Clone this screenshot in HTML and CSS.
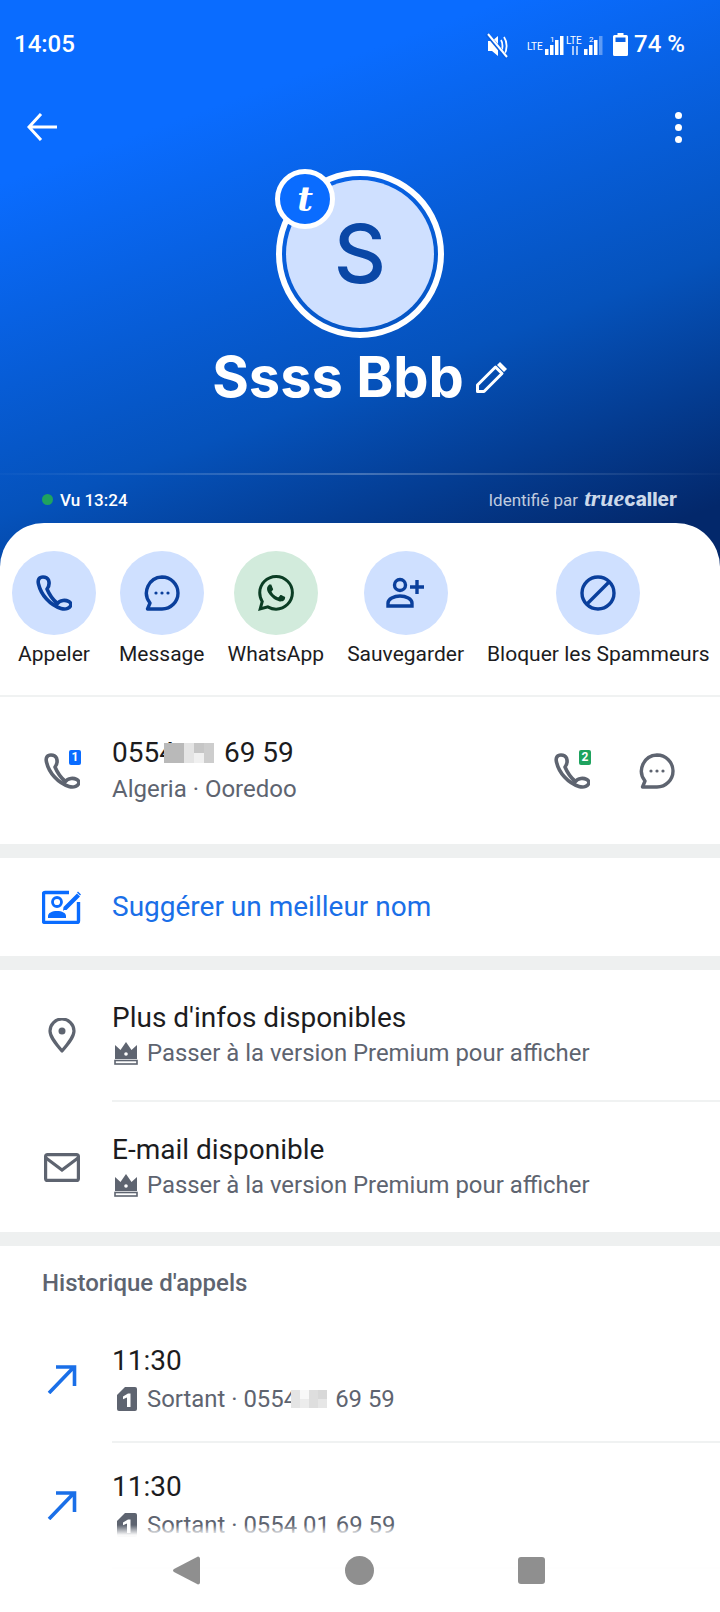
FILE: index.html
```html
<!DOCTYPE html>
<html>

<head>
    <meta charset="UTF-8">
    <title>Ssss Bbb</title>
    <link rel="stylesheet" href="styles.css">
</head>

<body>
    <svg class="defs" width="0" height="0">
        <symbol id="phone" viewBox="0 0 36 36">
            <path d="M7 2C3 2 1.500 5 2.500 9 5 20 14 30 25 33.500c5 1.500 9.500-.5 10-4 0-2.500-4-4.500-8-4-3 .5-4.500 1.500-5.500 3C17 25 13.500 20 11 14c2-2.500 2.500-6 1.500-9C11.500 3 10 2 7 2Z" fill="none" stroke="currentColor" stroke-width="3.600" stroke-linejoin="round" />
        </symbol>
        <symbol id="bubble" viewBox="0 0 36 36">
            <path d="M18 2a16 16 0 0 1 0 32H3.500l2.500-6A16 16 0 0 1 18 2Z" fill="none" stroke="currentColor" stroke-width="3.400" stroke-linejoin="round" />
            <circle cx="12" cy="18" r="1.600" fill="currentColor" />
            <circle cx="18" cy="18" r="1.600" fill="currentColor" />
            <circle cx="24" cy="18" r="1.600" fill="currentColor" />
        </symbol>
        <symbol id="crown" viewBox="0 0 24 24">
            <path d="M1 4l5.500 5L12 1l5.500 8L23 4v14H1Z" fill="currentColor" />
            <rect x="1" y="19.500" width="22" height="3.500" fill="#fff" stroke="currentColor" stroke-width="1.600" />
            <circle cx="12" cy="13" r="1.800" fill="#fff" />
        </symbol>
        <symbol id="outgoing" viewBox="0 0 30 30">
            <path d="M2 29L27 3M9 3h18.500v19" fill="none" stroke="currentColor" stroke-width="3.600" />
        </symbol>
        <symbol id="sim" viewBox="0 0 20 24">
            <path d="M8 0h10a2 2 0 0 1 2 2v20a2 2 0 0 1-2 2H2a2 2 0 0 1-2-2V8Z" fill="currentColor" />
            <path d="M6 9.500l5-3h2.500V20h-3.500V10.500l-4 1.800Z" fill="#fff" />
        </symbol>
    </svg>

    <div class="page">
        <header class="hero">
            <div class="status">
                <span class="clock">14:05</span>
                <div class="status-right">
                    <svg class="status-icons" width="116" height="30" viewBox="-2 0 116 30">
                        <g transform="translate(-2 0)">
                            <path d="M1 10h4l6-5v20l-6-5H1Z" fill="#fff" />
                            <path d="M14 9c2 3 2 9 0 12M17 6c3.500 5 3.500 13 0 18" fill="none" stroke="#fff" stroke-width="1.800" />
                            <path d="M0 3l20 24" stroke="#0a5fe0" stroke-width="4" />
                            <path d="M1 3l19 23" stroke="#fff" stroke-width="2" />
                        </g>
                        <text class="lte" x="38" y="19">LTE</text>
                        <text class="sim-no" x="61" y="11">1</text>
                        <rect x="56" y="18" width="3.500" height="6" fill="#fff" />
                        <rect x="61" y="14" width="3.500" height="10" fill="#fff" />
                        <rect x="66" y="9" width="3.500" height="15" fill="#fff" />
                        <rect x="71" y="5" width="3.500" height="19" fill="#fff" />
                        <text class="lte" x="77" y="13">LTE</text>
                        <path d="M84 15v9M88 15v9" stroke="#fff" stroke-width="1.300" />
                        <text class="sim-no" x="100" y="11">2</text>
                        <rect x="95" y="18" width="3.500" height="6" fill="#fff" />
                        <rect x="100" y="14" width="3.500" height="10" fill="#fff" />
                        <rect x="105" y="9" width="3.500" height="15" fill="#fff" />
                        <rect x="110" y="5" width="3.500" height="19" fill="#fff" fill-opacity=".35" />
                    </svg>
                    <svg class="battery" width="15" height="23" viewBox="0 0 15 23">
                        <path d="M4.500 0h6v2h3a1.500 1.500 0 0 1 1.500 1.500V21.500a1.500 1.500 0 0 1-1.500 1.500h-12A1.500 1.500 0 0 1 0 21.500V3.500A1.500 1.500 0 0 1 1.500 2h3Z" fill="#fff" />
                        <rect x="2.500" y="4.500" width="10" height="4.500" fill="#0a62e6" />
                    </svg>
                    <span class="percent">74 %</span>
                </div>
            </div>

            <div class="toolbar">
                <svg width="30" height="28" viewBox="0 0 30 28">
                    <path d="M14 1L2 14l12 13M2 14h28" fill="none" stroke="#fff" stroke-width="3" />
                </svg>
                <div class="dots"><i></i><i></i><i></i></div>
            </div>

            <div class="avatar">
                <div class="avatar-inner">S</div>
                <div class="badge">t</div>
            </div>

            <div class="name-row">
                <h1>Ssss Bbb</h1>
                <svg class="pencil" width="33" height="33" viewBox="0 0 33 33">
                    <path d="M2.500 24L20.500 6l6.500 6.500L9 30.500H2.500Z" fill="none" stroke="#fff" stroke-width="3" stroke-linejoin="round" />
                    <path d="M25 1l7 7-3 3-7-7Z" fill="#fff" />
                </svg>
            </div>

            <div class="hero-line"></div>

            <div class="hero-foot">
                <div class="seen"><i class="dot"></i>Vu 13:24</div>
                <div class="identified">Identifié par <span class="logo"><em>true</em>caller</span></div>
            </div>
        </header>

        <main class="sheet">
            <section class="actions">
                <div class="action">
                    <div class="round"><svg width="36" height="36"><use href="#phone" /></svg></div>
                    <span>Appeler</span>
                </div>
                <div class="action">
                    <div class="round"><svg width="36" height="36"><use href="#bubble" /></svg></div>
                    <span>Message</span>
                </div>
                <div class="action">
                    <div class="round green">
                        <svg width="36" height="36" viewBox="0 0 24 24">
                            <path fill="currentColor" d="M17.472 14.382c-.297-.149-1.758-.867-2.030-.967-.273-.099-.471-.148-.67.15-.197.297-.767.966-.94 1.164-.173.199-.347.223-.644.075-.297-.15-1.255-.463-2.390-1.475-.883-.788-1.480-1.761-1.653-2.059-.173-.297-.018-.458.130-.606.134-.133.298-.347.446-.52.149-.174.198-.298.298-.497.099-.198.050-.371-.025-.52-.075-.149-.669-1.612-.916-2.207-.242-.579-.487-.5-.669-.51-.173-.008-.371-.01-.57-.01-.198 0-.52.074-.792.372-.272.297-1.040 1.016-1.040 2.479 0 1.462 1.065 2.875 1.213 3.074.149.198 2.096 3.200 5.077 4.487.709.306 1.262.489 1.694.625.712.227 1.360.195 1.871.118.571-.085 1.758-.719 2.006-1.413.248-.694.248-1.289.173-1.413-.074-.124-.272-.198-.57-.347m-5.421 7.403h-.004a9.870 9.870 0 0 1-5.031-1.378l-.361-.214-3.741.982.998-3.648-.235-.374a9.860 9.860 0 0 1-1.510-5.260c.001-5.450 4.436-9.884 9.888-9.884 2.640 0 5.122 1.030 6.988 2.898a9.825 9.825 0 0 1 2.893 6.994c-.003 5.450-4.437 9.884-9.885 9.884m8.413-18.297A11.815 11.815 0 0 0 12.050 0C5.495 0 .16 5.335.157 11.892c0 2.096.547 4.142 1.588 5.945L.057 24l6.305-1.654a11.882 11.882 0 0 0 5.683 1.448h.005c6.554 0 11.890-5.335 11.893-11.893a11.821 11.821 0 0 0-3.480-8.413Z" />
                        </svg>
                    </div>
                    <span>WhatsApp</span>
                </div>
                <div class="action">
                    <div class="round">
                        <svg width="40" height="36" viewBox="0 0 40 36">
                            <circle cx="14" cy="10" r="5.500" fill="none" stroke="currentColor" stroke-width="3.400" />
                            <path d="M2 31v-3c0-4 6-7 12-7s12 3 12 7v3Z" fill="none" stroke="currentColor" stroke-width="3.400" />
                            <path d="M31 5v14M24 12h14" stroke="currentColor" stroke-width="3.400" />
                        </svg>
                    </div>
                    <span>Sauvegarder</span>
                </div>
                <div class="action">
                    <div class="round">
                        <svg width="36" height="36" viewBox="0 0 36 36">
                            <circle cx="18" cy="18" r="16" fill="none" stroke="currentColor" stroke-width="3.400" />
                            <path d="M29 7L7 29" stroke="currentColor" stroke-width="3.400" />
                        </svg>
                    </div>
                    <span>Bloquer les Spammeurs</span>
                </div>
            </section>

            <section class="row number-row">
                <div class="slot">
                    <svg class="icon" width="36" height="36"><use href="#phone" /></svg>
                    <b class="sim-tag blue">1</b>
                </div>
                <div class="texts">
                    <div class="title">0554<svg class="mosaic big" width="50" height="20" viewBox="0 0 5 2"><rect width="2" height="2" fill="#b9b9b9" /><rect x="2" width="1" height="2" fill="#e4e4e4" /><rect x="3" width="1" height="1" fill="#c6c6c6" /><rect x="3" y="1" width="1" height="1" fill="#f0f0f0" /><rect x="4" width="1" height="2" fill="#cdcdcd" /></svg>69 59</div>
                    <div class="sub">Algeria · Ooredoo</div>
                </div>
                <div class="row-end">
                    <div class="slot-small">
                        <svg class="icon" width="36" height="36"><use href="#phone" /></svg>
                        <b class="sim-tag green-tag">2</b>
                    </div>
                    <svg class="icon" width="36" height="36"><use href="#bubble" /></svg>
                </div>
            </section>

            <div class="gap"></div>

            <section class="row suggest-row">
                <div class="slot">
                    <svg class="card-edit" width="40" height="34" viewBox="0 0 40 34">
                        <path d="M27 2.500H3a1.500 1.500 0 0 0-1.500 1.500v27A1.500 1.500 0 0 0 3 32.500h32a1.500 1.500 0 0 0 1.500-1.500V12" fill="none" stroke="currentColor" stroke-width="3.400" />
                        <circle cx="15" cy="12" r="4.500" fill="none" stroke="currentColor" stroke-width="2.800" />
                        <path d="M6 28v-2c0-3 4-5 9-5s9 2 9 5v2Z" fill="currentColor" />
                        <path d="M22 20l-1 1 .5-4L35 3.500 38 6.500 24.500 20Z" fill="currentColor" />
                        <path d="M36 1.500l3 3-1 1-3-3Z" fill="currentColor" />
                    </svg>
                </div>
                <div class="title link">Suggérer un meilleur nom</div>
            </section>

            <div class="gap"></div>

            <section>
                <div class="row info-row">
                    <div class="slot">
                        <svg class="icon" width="28" height="35" viewBox="0 0 28 35">
                            <path d="M14 33C8 26 2 19 2 13a12 12 0 0 1 24 0c0 6-6 13-12 20Z" fill="none" stroke="currentColor" stroke-width="3.200" stroke-linejoin="round" />
                            <circle cx="14" cy="13" r="3.500" fill="currentColor" />
                        </svg>
                    </div>
                    <div class="texts">
                        <div class="title">Plus d'infos disponibles</div>
                        <div class="sub with-icon"><svg class="icon crown" width="24" height="24"><use href="#crown" /></svg>Passer à la version Premium pour afficher</div>
                    </div>
                </div>
                <div class="rule"></div>
                <div class="row info-row">
                    <div class="slot">
                        <svg class="icon" width="36" height="29" viewBox="0 0 36 29">
                            <rect x="1.600" y="1.600" width="32.800" height="25.800" rx="2" fill="none" stroke="currentColor" stroke-width="3.200" />
                            <path d="M2 5l16 12L34 5" fill="none" stroke="currentColor" stroke-width="3.200" />
                        </svg>
                    </div>
                    <div class="texts">
                        <div class="title">E-mail disponible</div>
                        <div class="sub with-icon"><svg class="icon crown" width="24" height="24"><use href="#crown" /></svg>Passer à la version Premium pour afficher</div>
                    </div>
                </div>
            </section>

            <div class="gap"></div>

            <section class="history">
                <h2>Historique d'appels</h2>
                <div class="row call-row">
                    <div class="slot">
                        <svg class="arrow" width="30" height="30"><use href="#outgoing" /></svg>
                    </div>
                    <div class="texts">
                        <div class="title">11:30</div>
                        <div class="sub with-icon"><svg class="icon sim" width="20" height="24"><use href="#sim" /></svg>Sortant · 0554<svg class="mosaic small" width="40" height="18" viewBox="0 0 4 2"><rect width="1" height="2" fill="#e4e4e4" /><rect x="1" width="1" height="1" fill="#f8f8f8" /><rect x="1" y="1" width="1" height="1" fill="#ececec" /><rect x="2" width="1" height="2" fill="#dedede" /><rect x="3" width="1" height="1" fill="#d8d8d8" /><rect x="3" y="1" width="1" height="1" fill="#e6e6e6" /></svg>69 59</div>
                    </div>
                </div>
                <div class="rule"></div>
                <div class="row call-row">
                    <div class="slot">
                        <svg class="arrow" width="30" height="30"><use href="#outgoing" /></svg>
                    </div>
                    <div class="texts">
                        <div class="title">11:30</div>
                        <div class="sub with-icon"><svg class="icon sim" width="20" height="24"><use href="#sim" /></svg>Sortant · 0554 01 69 59</div>
                    </div>
                </div>
                <div class="rule"></div>
                <div class="row call-row">
                    <div class="slot"></div>
                    <div class="texts">
                        <div class="title">11:24</div>
                    </div>
                </div>
            </section>
        </main>

        <nav class="navbar">
            <svg width="27" height="29" viewBox="0 0 27 29">
                <path d="M25 .5c1 0 2 1 2 2v24c0 1-1 2-2 2L1 16c-1.300-.8-1.300-2.200 0-3Z" fill="#8f8f8f" />
            </svg>
            <i class="nav-circle"></i>
            <i class="nav-square"></i>
        </nav>
    </div>
</body>

</html>
```

FILE: styles.css
```css
* {
    box-sizing: border-box;
}

body {
    margin: 0;
    font-family: Roboto, sans-serif;
    background-color: #fff;
}

.defs {
    position: absolute;
}

.page {
    position: relative;
    height: 1612px;
    overflow: hidden;
}

/* blue top part */
.hero {
    height: 572px;
    color: #fff;
    background: linear-gradient(160deg, #0a6cff 22%, #0552bb 62%, #03286b 92%);
}

.status {
    height: 84px;
    padding: 4px 35px 0 14px;
    display: flex;
    align-items: center;
    justify-content: space-between;
}

.clock {
    font-size: 24px;
    font-weight: 500;
}

.status-right {
    display: flex;
    align-items: center;
}

.status-icons {
    margin-top: 3px;
    overflow: visible;
}

.lte {
    font: 400 10px Roboto, sans-serif;
    fill: #fff;
}

.sim-no {
    font: 400 8px Roboto, sans-serif;
    fill: #fff;
}

.battery {
    margin: 0 6px 0 10px;
}

.percent {
    font-size: 24px;
    font-weight: 500;
}

.toolbar {
    height: 86px;
    padding: 0 38px 0 27px;
    display: flex;
    align-items: center;
    justify-content: space-between;
}

.dots {
    display: flex;
    flex-direction: column;
    gap: 5px;
}

.dots i {
    width: 7px;
    height: 7px;
    border-radius: 50%;
    background-color: #fff;
}

.avatar {
    position: relative;
    width: 168px;
    height: 168px;
    margin: 0 auto;
    border: 6px solid #fff;
    border-radius: 50%;
    padding: 4px;
}

.avatar-inner {
    height: 100%;
    border-radius: 50%;
    background-color: #cfe0ff;
    color: #0a47a6;
    font-family: Inter, sans-serif;
    font-size: 81px;
    font-weight: 500;
    display: flex;
    align-items: center;
    justify-content: center;
}

.badge {
    position: absolute;
    top: -7px;
    left: -7px;
    width: 60px;
    height: 60px;
    border: 5px solid #fff;
    border-radius: 50%;
    background-color: #0a6cff;
    color: #fff;
    font-family: "DejaVu Serif", serif;
    font-size: 34px;
    font-style: italic;
    font-weight: 700;
    display: flex;
    align-items: center;
    justify-content: center;
}

.name-row {
    height: 78px;
    display: flex;
    align-items: center;
    justify-content: center;
    gap: 11px;
}

.name-row h1 {
    margin: 0;
    font-family: Inter, sans-serif;
    font-size: 56px;
    font-weight: 700;
}

.hero-line {
    height: 2px;
    margin-top: 57px;
    background: linear-gradient(90deg, rgba(255, 255, 255, 0.02), rgba(255, 255, 255, 0.25) 50%, rgba(255, 255, 255, 0.02));
}

.hero-foot {
    height: 49px;
    padding: 0 43px 0 42px;
    display: flex;
    align-items: center;
    justify-content: space-between;
}

.seen {
    display: flex;
    align-items: center;
    gap: 7px;
    font-size: 17px;
    font-weight: 500;
}

.dot {
    width: 11px;
    height: 11px;
    border-radius: 50%;
    background-color: #1fa35f;
}

.identified {
    margin-top: -3px;
    font-size: 17px;
    color: rgba(255, 255, 255, 0.75);
}

.logo {
    margin-left: 2px;
    font-family: Inter, sans-serif;
    font-size: 19px;
    font-weight: 800;
    color: #ccd9ea;
}

.logo em {
    font-family: "Liberation Serif", serif;
    font-size: 24px;
    font-weight: 700;
}

/* white sheet */
.sheet {
    position: relative;
    margin-top: -49px;
    border-radius: 44px 44px 0 0;
    background-color: #fff;
}

.actions {
    padding: 28px 0 27px 12px;
    border-bottom: 2px solid #f0f2f2;
    display: flex;
    gap: 23px;
}

.action {
    min-width: 84px;
    display: flex;
    flex-direction: column;
    align-items: center;
    gap: 5px;
    flex-shrink: 0;
    font-size: 21px;
    line-height: 28px;
    color: #1c1c1e;
}

.round {
    width: 84px;
    height: 84px;
    border-radius: 50%;
    background-color: #cfe0ff;
    color: #0a3f9c;
    display: flex;
    align-items: center;
    justify-content: center;
}

.green {
    background-color: #d2ebdc;
    color: #0b3d24;
}

.gap {
    height: 14px;
    background-color: #eef0f0;
}

.rule {
    height: 2px;
    margin-left: 112px;
    background-color: #f0f2f2;
}

.row {
    display: flex;
    align-items: center;
    padding-left: 44px;
    gap: 32px;
}

.slot {
    position: relative;
    width: 36px;
    flex-shrink: 0;
    display: flex;
    align-items: center;
    justify-content: center;
}

.slot svg {
    flex-shrink: 0;
}

.slot-small {
    position: relative;
    display: flex;
}

.icon {
    color: #5e6470;
    display: block;
    flex-shrink: 0;
}

.sim-tag {
    position: absolute;
    top: -3px;
    right: -1px;
    width: 12px;
    height: 15px;
    border-radius: 2px;
    color: #fff;
    font-size: 12px;
    line-height: 15px;
    text-align: center;
}

.blue {
    background-color: #0a6cff;
}

.green-tag {
    background-color: #1fa35f;
}

.texts {
    flex: 1;
    min-width: 0;
}

.title {
    font-size: 28px;
    line-height: 34px;
    color: #1c1c1e;
}

.sub {
    margin-top: 3px;
    font-size: 24px;
    line-height: 32px;
    color: #5e6470;
}

.with-icon {
    display: flex;
    align-items: center;
    white-space: pre;
    font-size: 23.900px;
}

.crown {
    margin: 0 9px 0 2px;
}

.sim {
    margin: 0 10px 0 5px;
}

.mosaic {
    display: inline-block;
    vertical-align: -1px;
}

.big {
    margin: 0 10px 0 -11px;
}

.small {
    margin: 0 6px 0 -8px;
}

.number-row {
    height: 147px;
}

.row-end {
    display: flex;
    align-items: center;
    gap: 49px;
    padding-right: 45px;
}

.suggest-row {
    height: 98px;
}

.card-edit {
    color: #0a6cff;
}

.link {
    color: #1a6fe8;
}

.info-row {
    height: 130px;
}

.info-row .sub {
    margin-top: 2px;
}

.history h2 {
    margin: 0;
    padding: 20px 0 17px 42px;
    font-size: 24px;
    font-weight: 500;
    line-height: 34px;
    color: #5e6470;
}

.call-row {
    height: 124px;
}

.call-row .sub {
    margin-top: 5px;
}

.arrow {
    color: #1a6fe8;
}

/* bottom navigation, sits over the scrolled list */
.navbar {
    position: absolute;
    left: 0;
    right: 0;
    bottom: 0;
    height: 90px;
    padding: 6px 175px 0 173px;
    background: linear-gradient(180deg, rgba(255, 255, 255, 0) 3px, rgba(255, 255, 255, 0.97) 13px, rgba(255, 255, 255, 0.92));
    display: flex;
    align-items: center;
    justify-content: space-between;
}

.nav-circle {
    width: 29px;
    height: 29px;
    border-radius: 50%;
    background-color: #8f8f8f;
}

.nav-square {
    width: 27px;
    height: 27px;
    border-radius: 3px;
    background-color: #8f8f8f;
}
```
